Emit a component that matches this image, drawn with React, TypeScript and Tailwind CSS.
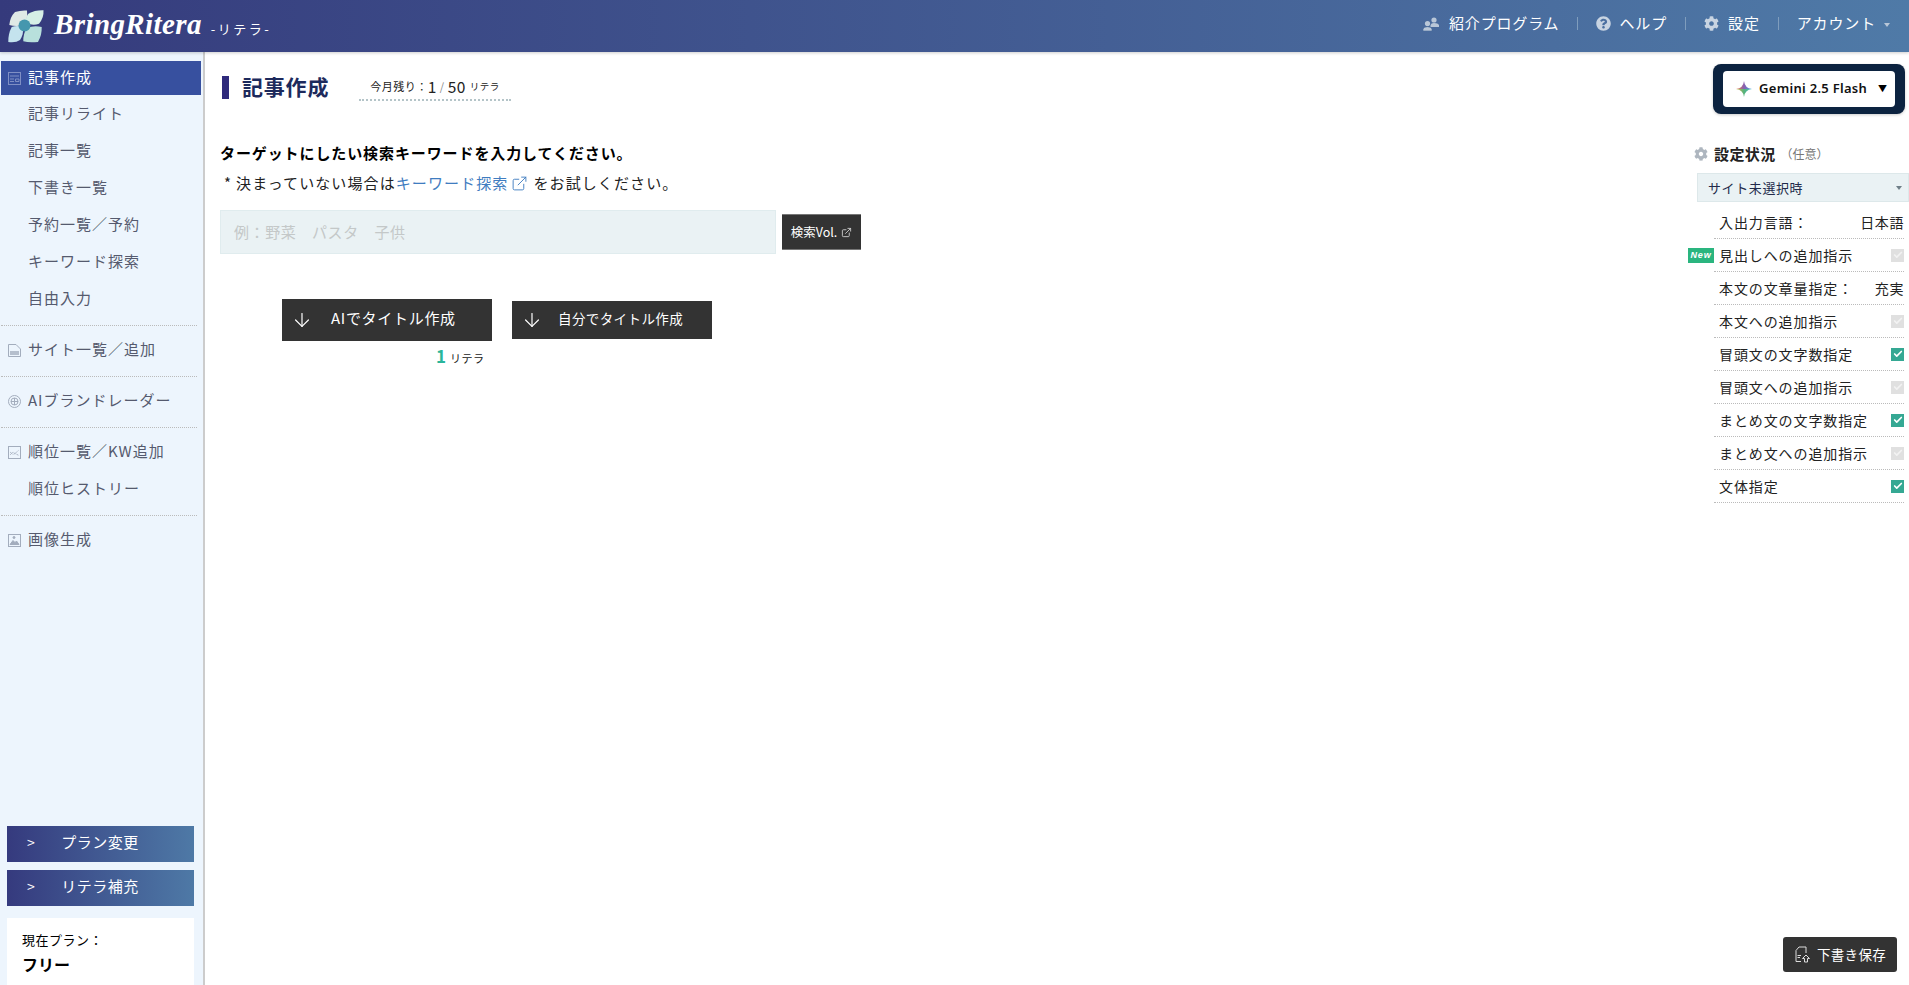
import { ArrowDown, ExternalLink, Check } from "lucide-react";
import { FaCog, FaQuestionCircle } from "react-icons/fa";

const font = { fontFamily: '"Noto Sans CJK JP", "Noto Sans", sans-serif' };

function Logo() {
  return (
    <svg width="36" height="33" viewBox="0 0 36 33" className="shrink-0">
      <path d="M7 2 Q13 0 19 0.5 Q20 9 16 15 Q8 17 1.3 15 Q2 7 7 2 Z" fill="#dfe9e6" />
      <path d="M35.5 0.3 Q27 0 20.3 3.7 Q17 8 18 13 Q25 16 31 13.7 Q36 8 35.5 0.3 Z" fill="#d6efe6" />
      <path d="M0.3 32 Q8 33 12 30 Q16 24 15 17 Q9 15 3.7 17 Q0 24 0.3 32 Z" fill="#c4e3ee" />
      <path d="M30 32 Q21 33 15.3 31.3 Q15 24 18.7 18 Q26 15 33.7 17 Q34 25 30 32 Z" fill="#b8e0dc" />
      <circle cx="16.5" cy="15.5" r="6" fill="#4597ae" />
    </svg>
  );
}

function Divider() {
  return <div className="ml-[1px] mr-[6px] mt-[7px] mb-[6px] border-t border-dotted border-[#bbbbbb]" />;
}

function NavRow({ label, active, icon }: { label: string; active?: boolean; icon?: React.ReactNode }) {
  return (
    <div
      className={`flex items-center text-[15px] tracking-[1px] ${
        active ? "bg-[#37509f] text-white h-[34px] mb-[1px]" : "text-[#555a6e] h-[37px]"
      }`}
    >
      <span className="w-[27px] pl-[7px] shrink-0 flex items-center">{icon}</span>
      <span className="pb-[2px]">{label}</span>
    </div>
  );
}

const NavIcon = ({ children, stroke = "#a3adbd" }: { children: React.ReactNode; stroke?: string }) => (
  <svg width="13" height="13" viewBox="0 0 13 13" fill="none" stroke={stroke} strokeWidth="1">
    {children}
  </svg>
);

function SideButton({ label }: { label: string }) {
  return (
    <div className="h-[36px] flex items-center bg-gradient-to-r from-[#353a7e] to-[#4e79a6] text-white text-[15px] tracking-[0.5px]">
      <span className="w-[45px] pl-[20px] text-[14px] pb-[3px]">&gt;</span>
      <span className="w-[96px] text-center pb-[4px]">{label}</span>
    </div>
  );
}

function Sidebar() {
  return (
    <aside className="w-[205px] shrink-0 bg-[#edf5fd] border-r-2 border-[#cccccc] pt-[9px] flex flex-col">
      <div className="pl-[1px]">
        <div className="pr-[2px]">
          <NavRow
            label="記事作成"
            active
            icon={
              <NavIcon stroke="#7f8fc4">
                <rect x="0.5" y="0.5" width="12" height="12" />
                <path d="M2 4h9M2 7h4M2 9.5h4M7.5 7h3.5v2.5h-3.5z" />
              </NavIcon>
            }
          />
        </div>
        <NavRow label="記事リライト" />
        <NavRow label="記事一覧" />
        <NavRow label="下書き一覧" />
        <NavRow label="予約一覧／予約" />
        <NavRow label="キーワード探索" />
        <NavRow label="自由入力" />
      </div>
      <Divider />
      <div className="pl-[1px]">
        <NavRow
          label="サイト一覧／追加"
          icon={
            <NavIcon>
              <path d="M0.5 0.5h7.5l4.5 4.5v7.5h-12z" />
              <path d="M2 8h9M2 10h9" strokeWidth="1.6" />
            </NavIcon>
          }
        />
      </div>
      <Divider />
      <div className="pl-[1px]">
        <NavRow
          label="AIブランドレーダー"
          icon={
            <NavIcon>
              <circle cx="6.5" cy="6.5" r="6" />
              <circle cx="6.5" cy="6.5" r="3.5" />
              <path d="M6.5 3v7M3 6.5h7" />
            </NavIcon>
          }
        />
      </div>
      <Divider />
      <div className="pl-[1px]">
        <NavRow
          label="順位一覧／KW追加"
          icon={
            <NavIcon>
              <rect x="0.5" y="0.5" width="12" height="12" />
              <path d="M2 9l3-3 2 1.5 4-3.5M2 6l3 2.5 2-1 4 2" strokeDasharray="1 0.7" />
            </NavIcon>
          }
        />
        <NavRow label="順位ヒストリー" />
      </div>
      <Divider />
      <div className="pl-[1px]">
        <NavRow
          label="画像生成"
          icon={
            <NavIcon>
              <rect x="0.5" y="0.5" width="12" height="12" />
              <path d="M2 10.5l3-4 2 2 1.5-1.5 2.5 3.5z" fill="#a3adbd" />
              <circle cx="6" cy="3.5" r="1" fill="#a3adbd" />
            </NavIcon>
          }
        />
      </div>
      <div className="mt-auto pl-[7px] pr-[9px] flex flex-col gap-[8px]">
        <SideButton label="プラン変更" />
        <SideButton label="リテラ補充" />
        <div className="bg-white h-[67px] mt-[4px] pl-[15px] pt-[12px] text-black">
          <div className="text-[13px] tracking-[0.5px] leading-[20px]">現在プラン：</div>
          <div className="text-[16px] font-bold leading-[28px]">フリー</div>
        </div>
      </div>
    </aside>
  );
}

function PeopleIcon() {
  return (
    <svg width="16" height="14" viewBox="0 0 16 14" fill="#b9c7d8" className="mr-[10px]">
      <circle cx="11" cy="3" r="2.6" />
      <path d="M7.5 10V8Q8 6 11 6Q15 6 16 8V10Z" />
      <circle cx="4.5" cy="6.5" r="2.6" />
      <path d="M0 14V12Q1 9.7 4.5 9.7Q8 9.7 9 12V14Z" stroke="#456a98" strokeWidth="0.6" />
    </svg>
  );
}

function Header() {
  const sep = <span className="w-[1px] h-[13px] bg-[#7f9dbd] mx-[18px]" />;
  return (
    <header className="h-[52px] bg-gradient-to-r from-[#353a7c] to-[#4f7aa7] shadow-[0_1px_3px_rgba(0,0,0,0.2)] flex items-center pl-[8px] pr-[19px] relative">
      <Logo />
      <span
        className="ml-[10px] text-white text-[29px] font-bold italic tracking-[0.4px] pb-[2px]"
        style={{ fontFamily: '"Liberation Serif", serif' }}
      >
        BringRitera
      </span>
      <span className="ml-[9px] mt-[5px] text-white text-[13px] tracking-[2.5px]">-リテラ-</span>
      <div className="ml-auto flex items-center text-white text-[15px] tracking-[0.85px] pb-[5px]">
        <PeopleIcon />
        紹介プログラム
        {sep}
        <FaQuestionCircle size={15} className="text-[#c8d4e2] mr-[8px]" />
        ヘルプ
        {sep}
        <FaCog size={15} className="text-[#c8d4e2] mr-[9px]" />
        設定
        {sep}
        アカウント
        <span className="ml-[8px] mt-[3px] w-0 h-0 border-x-[3.5px] border-x-transparent border-t-[4px] border-t-[#b9c7d8]" />
      </div>
    </header>
  );
}

function GeminiStar() {
  const star = "M8 0 Q8.8 7.2 16 8 Q8.8 8.8 8 16 Q7.2 8.8 0 8 Q7.2 7.2 8 0 Z";
  return (
    <svg width="16" height="16" viewBox="0 0 16 16">
      <defs>
        <linearGradient id="gemA" x1="0" y1="0" x2="1" y2="0">
          <stop offset="0" stopColor="#e8833f" />
          <stop offset="0.5" stopColor="#8a5fb0" />
          <stop offset="1" stopColor="#3f9fe0" />
        </linearGradient>
        <linearGradient id="gemB" x1="0" y1="0" x2="1" y2="0">
          <stop offset="0" stopColor="#d9b84a" />
          <stop offset="0.5" stopColor="#56b27a" />
          <stop offset="1" stopColor="#3fc0c8" />
        </linearGradient>
        <clipPath id="gemTop">
          <rect x="0" y="0" width="16" height="8" />
        </clipPath>
        <clipPath id="gemBottom">
          <rect x="0" y="8" width="16" height="8" />
        </clipPath>
      </defs>
      <path d={star} fill="url(#gemA)" clipPath="url(#gemTop)" />
      <path d={star} fill="url(#gemB)" clipPath="url(#gemBottom)" />
    </svg>
  );
}

function Box({ on }: { on: boolean }) {
  return (
    <span className={`w-[13px] h-[13px] flex items-center justify-center ${on ? "bg-[#35a893]" : "bg-[#e0e0e0]"}`}>
      <Check size={10} strokeWidth={4} className={on ? "text-white" : "text-[#f2f2f2]"} />
    </span>
  );
}

const rows: { label: string; value?: string; on?: boolean; isNew?: boolean }[] = [
  { label: "入出力言語：", value: "日本語" },
  { label: "見出しへの追加指示", on: false, isNew: true },
  { label: "本文の文章量指定：", value: "充実" },
  { label: "本文への追加指示", on: false },
  { label: "冒頭文の文字数指定", on: true },
  { label: "冒頭文への追加指示", on: false },
  { label: "まとめ文の文字数指定", on: true },
  { label: "まとめ文への追加指示", on: false },
  { label: "文体指定", on: true },
];

function SettingsPanel() {
  return (
    <div className="w-[212px] shrink-0 text-[14px]">
      <div className="flex justify-end pr-[4px] pt-[12px]">
        <div className="bg-[#0c2340] rounded-[8px] w-[192px] h-[50px] px-[10px] py-[7px] shadow-[0_1px_3px_rgba(0,0,0,0.2)]">
          <div className="bg-white rounded-[4px] h-[36px] flex items-center pl-[13px] pr-[8px]">
            <GeminiStar />
            <span className="ml-[7px] text-[13px] font-semibold text-[#111] tracking-[0.3px]" style={{ fontFamily: '"Noto Sans", sans-serif' }}>
              Gemini 2.5 Flash
            </span>
            <span className="ml-auto text-[9px] text-black">▼</span>
          </div>
        </div>
      </div>
      <div className="flex items-center mt-[30px] -ml-[3px] h-[20px]">
        <FaCog size={14} className="text-[#aeb6bf]" />
        <span className="ml-[6px] text-[15px] font-bold text-[#222] tracking-[0.4px]">設定状況</span>
        <span className="ml-[5px] text-[12px] text-[#777]">（任意）</span>
      </div>
      <div className="mt-[9px] h-[29px] bg-[#eaf2f4] border border-[#dde8ea] flex items-center pl-[10px] pr-[6px] text-[13px] text-[#222a4a] tracking-[0.6px]">
        サイト未選択時
        <span className="ml-auto w-0 h-0 border-x-[3.5px] border-x-transparent border-t-[4px] border-t-[#6f7f88]" />
      </div>
      <div className="mt-[4px] ml-[17px] mr-[5px]">
        {rows.map((r) => (
          <div
            key={r.label}
            className="relative h-[33px] border-b border-dotted border-[#bbbbbb] flex items-center justify-between pl-[5px] text-[14px] tracking-[0.9px] text-[#222]"
          >
            {r.isNew && (
              <span className="absolute left-[-26px] top-[9px] w-[26px] h-[15px] bg-[#2ab57f] text-white text-[9px] font-bold italic flex items-center justify-center" style={{ fontFamily: '"Liberation Sans", sans-serif' }}>
                New
              </span>
            )}
            <span>{r.label}</span>
            {r.value ? <span className="tracking-[0.6px]">{r.value}</span> : <Box on={!!r.on} />}
          </div>
        ))}
      </div>
    </div>
  );
}

function Main() {
  return (
    <main className="flex-1 min-w-0 pl-[15px]">
      <div className="flex items-center pt-[22px]">
        <span className="w-[7px] h-[23px] bg-[#2f2a7c] ml-[2px]" />
        <h1 className="ml-[13px] text-[21px] font-bold text-[#1d2a5c] tracking-[0.8px] leading-[23px] pb-[2px]">記事作成</h1>
        <div className="ml-[30px] px-[11px] h-[27px] border-b-2 border-dotted border-[#b4c4c8] flex items-center text-[11px] text-[#222] tracking-[0.5px]">
          今月残り：<span className="text-[15.5px]">1</span>
          <span className="mx-[3px] text-[#888]">/</span>
          <span className="text-[15.5px]">50</span>
          <span className="ml-[4px] text-[9.5px]">リテラ</span>
        </div>
      </div>
      <p className="mt-[41px] text-[15px] font-bold text-black tracking-[0.9px] leading-[22px]">
        ターゲットにしたい検索キーワードを入力してください。
      </p>
      <p className="mt-[8px] text-[15px] text-[#222] tracking-[1.1px] leading-[22px] flex items-center">
        <span className="ml-[4px] mr-[4px]">*</span>
        決まっていない場合は
        <span className="text-[#3f7cc0]">キーワード探索</span>
        <ExternalLink size={17} strokeWidth={1.3} className="text-[#3f7cc0] ml-[3px] mr-[5px]" />
        をお試しください。
      </p>
      <div className="mt-[16px] flex items-center">
        <div className="w-[556px] h-[44px] bg-[#eaf2f4] border border-[#e0ecee] flex items-center pl-[13px] text-[15px] text-[#c4c8c8] tracking-[0.6px]">
          例：野菜　パスタ　子供
        </div>
        <div className="ml-[6px] w-[79px] h-[36px] bg-[#333333] border-y border-[#777777] flex items-center justify-center text-white text-[12.5px]">
          検索Vol.
          <ExternalLink size={11} className="ml-[4px] text-[#ccc]" />
        </div>
      </div>
      <div className="mt-[45px] ml-[62px] flex items-center gap-[20px]">
        <div className="w-[210px] h-[42px] bg-[#333333] flex items-center pl-[9px] text-white text-[15px] tracking-[0.7px]">
          <ArrowDown size={22} strokeWidth={1.3} />
          <span className="ml-[18px] pb-[3px]">AIでタイトル作成</span>
        </div>
        <div className="w-[200px] h-[38px] bg-[#333333] flex items-center pl-[9px] text-white text-[13.5px] tracking-[0.4px]">
          <ArrowDown size={22} strokeWidth={1.3} />
          <span className="ml-[15px] pb-[3px]">自分でタイトル作成</span>
        </div>
      </div>
      <div className="ml-[216px] mt-[3px] flex items-baseline text-[#222] leading-[24px]">
        <span className="text-[17px] font-bold text-[#2ab59a]">1</span>
        <span className="ml-[4px] text-[11px] tracking-[0.5px]">リテラ</span>
      </div>
    </main>
  );
}

export default function App() {
  return (
    <div className="h-[985px] w-[1909px] overflow-hidden bg-white flex flex-col relative" style={font}>
      <Header />
      <div className="flex-1 flex min-h-0">
        <Sidebar />
        <Main />
        <SettingsPanel />
      </div>
      <div className="absolute left-[1783px] top-[937px] w-[114px] h-[35px] bg-[#333333] rounded-[3px] flex items-center pl-[11px] text-white text-[13.5px] tracking-[0.3px]">
        <svg width="17" height="17" viewBox="0 0 17 17" fill="none" stroke="#dddddd" strokeWidth="1" className="mr-[6px]">
          <path d="M9 1H5L2 4.5V15.5H7M9 1H12V7" />
          <path d="M3.5 9.5H7M3.5 11.5H6" />
          <path d="M12 9L15.5 12.5H13.5V16H10.5V12.5H8.5Z" />
        </svg>
        下書き保存
      </div>
    </div>
  );
}
